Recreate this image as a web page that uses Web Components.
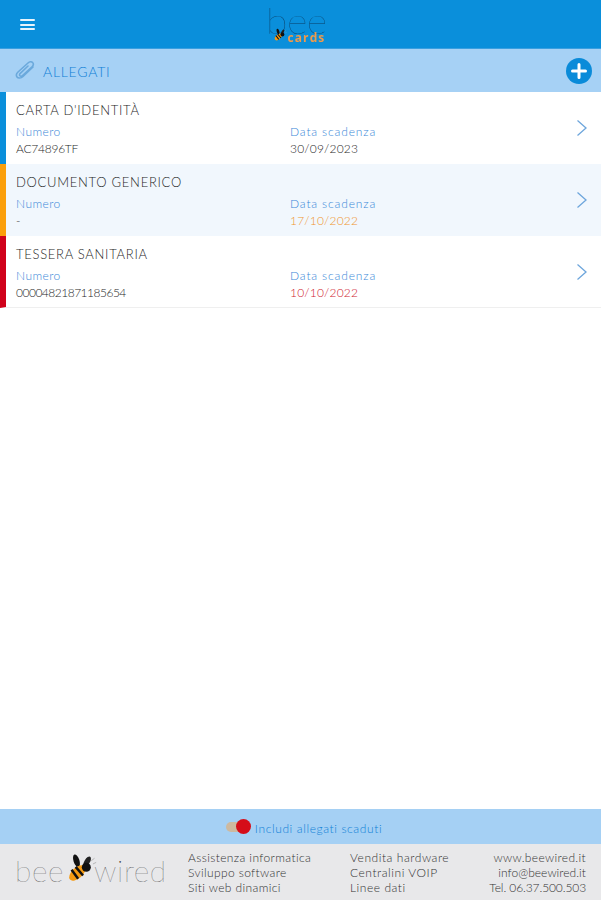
<!DOCTYPE html>
<html lang="it"><head><meta charset="utf-8"><title>Allegati</title>
<style>
html,body{margin:0;padding:0;height:100%;background:#fff}
body{font-family:Lato,"Noto Sans",sans-serif;font-weight:300;color:#333}
bc-app{height:900px;filter:blur(.35px)}
</style></head><body>
<template id="bee"><svg viewBox="0 0 40 34" width="40" height="34" style="display:block;overflow:visible">
<ellipse cx="14" cy="7" rx="3.600" ry="8" fill="#111" transform="rotate(-18 14 7)"/>
<ellipse cx="27" cy="8" rx="3.300" ry="7" fill="#222" transform="rotate(32 27 8)"/>
<ellipse cx="15" cy="22" rx="6.500" ry="12" fill="#f59a12" transform="rotate(48 15 22)"/>
<path d="M13 14.500 L22 25 M8 18 L16 29" stroke="#111" stroke-width="3" fill="none"/>
<circle cx="26" cy="15" r="5.500" fill="#111"/>
<path d="M32 7l4-3M34 11l4-2" stroke="#aaa" stroke-width="1" fill="none"/>
</svg></template>

<script>
const mk=(name,css,html)=>customElements.define(name,class extends HTMLElement{
  constructor(){super();this.attachShadow({mode:'open'});}
  connectedCallback(){this.shadowRoot.innerHTML='<style>'+css+'</style>'+(typeof html==='function'?html(this):html);}
});
const beeSvg=()=>document.getElementById('bee').innerHTML;

mk('bc-topbar',`:host{display:flex;align-items:center;justify-content:center;position:relative;height:48px;background:#0a8fdb;border-bottom:1px solid #3a9fe0;flex:none}
.menu{position:absolute;left:20px;top:19px;width:15px;height:11px;display:flex;flex-direction:column;justify-content:space-between}
.menu i{display:block;height:2px;background:#e8f4fc;border-radius:1px}
.logo{position:relative;width:62px;height:48px;margin-left:-6px}
.b{position:absolute;left:-1px;top:7px;font:100 36px/26px Lato,sans-serif;color:#0b3f66;letter-spacing:-.5px;transform:scaleX(1.1);transform-origin:left}
.c{position:absolute;left:21px;top:33px;font:700 12px/10px "Open Sans",sans-serif;color:#ef9a4c;letter-spacing:1.100px}
.i{position:absolute;left:6px;top:29px;transform:scale(.36);transform-origin:0 0}`,
()=>`<div class="menu"><i></i><i></i><i></i></div><div class="logo"><span class="b">bee</span><span class="c">cards</span><span class="i">${beeSvg()}</span></div>`);

mk('bc-band',`:host{display:flex;align-items:center;height:43px;background:#a6d1f5;flex:none;padding:0 9px 0 15px}
svg.p{width:21px;height:21px;margin-right:7px}
.t{flex:1;font-size:14px;color:#0f80d6;letter-spacing:.75px;padding-top:2px}
svg.a{width:26px;height:26px}`,
`<svg class="p" viewBox="0 0 21 21" fill="none" stroke="#6ba9dc" stroke-width="1.600" stroke-linecap="round"><path d="M18 7 8 16.500c-2 2-5 2-6 .5s-.6-3.500 1-5L13 3c1.500-1.400 3.600-1.600 4.600-.5s.8 3-.6 4.400L7.500 15.500c-.8.8-2 .9-2.600.3s-.4-1.700.4-2.500L13 6"/></svg><span class="t"><slot></slot></span>
<svg class="a" viewBox="0 0 26 26"><circle cx="13" cy="13" r="13" fill="#0a8bd9"/><path d="M13 6.500v13M6.500 13h13" stroke="#fff" stroke-width="3" stroke-linecap="round"/></svg>`);

mk('bc-row',`:host{display:block;flex:none;height:72px;box-sizing:border-box;background:#fff;position:relative;border-left:6px solid var(--bar);padding:10px 10px 0 10px}
:host([alt]){background:#f1f7fd}
.n{font-size:13px;line-height:16px;letter-spacing:.72px;color:#1f1f1f}
.g{display:grid;grid-template-columns:274px 1fr;margin-top:5px;font-size:12px;line-height:17px}
.l{color:#3a88d8;letter-spacing:.42px}
.l.ds{letter-spacing:.85px}
.v{color:#1f1f1f;letter-spacing:var(--ns,0)}
.d{color:var(--date,#1f1f1f);letter-spacing:.2px}
svg{position:absolute;right:13px;top:27px;width:12px;height:18px}`,
h=>`<div class="n">${h.getAttribute('name')}</div><div class="g"><div><div class="l">Numero</div><div class="v">${h.getAttribute('num')}</div></div><div><div class="l ds">Data scadenza</div><div class="d">${h.getAttribute('date')}</div></div></div>
<svg viewBox="0 0 12 18" fill="none" stroke="#6ea6dc" stroke-width="1.300"><path d="M1.500 1.500 10 9 1.500 16.500"/></svg>`);

mk('bc-toggle',`:host{display:flex;align-items:center;justify-content:center;height:35px;flex:none;background:#a5d0f4;font-size:12px;color:#0f80d6;letter-spacing:.6px;padding:3px 0 0 7px;box-sizing:border-box}
.s{position:relative;width:22px;height:10px;border-radius:5px;background:#cdb9a0;margin:-3px 7px 0 0}
.s i{position:absolute;right:-3px;top:-3px;width:15px;height:15px;border-radius:50%;background:#d50d19}`,
`<span class="s"><i></i></span><slot></slot>`);

mk('bc-footer',`:host{display:flex;height:56px;flex:none;background:#e8e8ea;color:#333;font-size:12px;line-height:15px;position:relative;box-sizing:border-box;padding:6px 15px 0 15px}
.logo{display:flex;align-items:center;width:173px;height:36px;margin-top:2px;font:100 30px/36px Lato,sans-serif;color:#444;letter-spacing:.6px}
.logo .bw{width:28px;height:30px;flex:none;margin:-1px 1px 0 1px}
.logo .bw svg{transform:scale(.82);transform-origin:0 0}
.c{letter-spacing:.38px}
.c1{width:162px}.c2{flex:1;letter-spacing:.55px}.c3{text-align:right;letter-spacing:.35px}
.c3 .t{letter-spacing:-.1px}.c3 .m{letter-spacing:.05px}`,
()=>`<div class="logo"><span>bee</span><span class="bw">${beeSvg()}</span><span>wired</span></div>
<div class="c c1">Assistenza informatica<br>Sviluppo software<br>Siti web dinamici</div>
<div class="c c2">Vendita hardware<br>Centralini VOIP<br>Linee dati</div>
<div class="c c3">www.beewired.it<br><span class="m">info@beewired.it</span><br><span class="t">Tel. 06.37.500.503</span></div>`);

mk('bc-app',`:host{display:flex;flex-direction:column;height:900px;width:601px}`,`<slot></slot>`);
</script>
<bc-app>
<bc-topbar></bc-topbar>
<bc-band>ALLEGATI</bc-band>
<bc-row style="--bar:#0a8fdb;--ns:-.25px" name="CARTA D'IDENTITÀ" num="AC74896TF" date="30/09/2023"></bc-row>
<bc-row alt style="--bar:#fb9f0b;--date:#f0952e" name="DOCUMENTO GENERICO" num="-" date="17/10/2022"></bc-row>
<bc-row style="--bar:#d0021b;--date:#cf1a2e;--ns:-.5px;border-bottom:1px solid #efefef" name="TESSERA SANITARIA" num="00004821871185654" date="10/10/2022"></bc-row>
<div style="flex:1"></div>
<bc-toggle>Includi allegati scaduti</bc-toggle>
<bc-footer></bc-footer>
</bc-app>
</body></html>
